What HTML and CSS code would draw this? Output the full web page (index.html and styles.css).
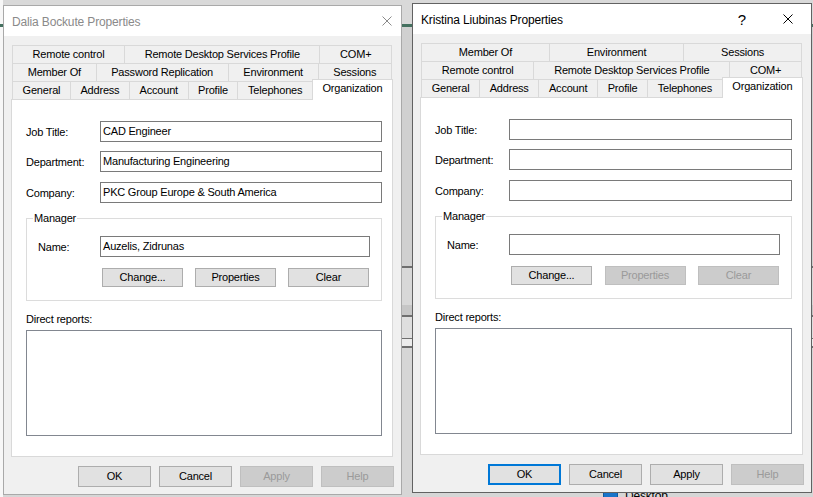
FILE: index.html
```html
<!DOCTYPE html>
<html lang="en">
<head>
<meta charset="utf-8">
<title>Properties</title>
<link rel="stylesheet" href="styles.css">
</head>
<body>
<div class="desktop">
  <div class="desk-icon"><span class="desk-glyph"></span><span class="desk-label">Desktop</span></div>

  <section class="dlg dlg-left is-inactive">
    <header class="titlebar">
      <span class="title">Dalia Bockute Properties</span>
      <span class="cap cap-close"><svg width="10" height="10" viewBox="0 0 10 10"><path d="M0.5 0.5L9.5 9.5M9.5 0.5L0.5 9.5" stroke="currentColor" stroke-width="1" fill="none"/></svg></span>
    </header>
    <div class="tabs">
      <div class="tabrow"><span class="tab">Remote control</span><span class="tab">Remote Desktop Services Profile</span><span class="tab">COM+</span></div>
      <div class="tabrow"><span class="tab">Member Of</span><span class="tab">Password Replication</span><span class="tab">Environment</span><span class="tab">Sessions</span></div>
      <div class="tabrow"><span class="tab">General</span><span class="tab">Address</span><span class="tab">Account</span><span class="tab">Profile</span><span class="tab">Telephones</span><span class="tab tab-active">Organization</span></div>
    </div>
    <div class="panel">
      <div class="field"><span class="lbl">Job Title:</span><div class="input">CAD Engineer</div></div>
      <div class="field"><span class="lbl">Department:</span><div class="input">Manufacturing Engineering</div></div>
      <div class="field field-company"><span class="lbl">Company:</span><div class="input">PKC Group Europe &amp; South America</div></div>
      <fieldset class="group">
        <legend>Manager</legend>
        <div class="field"><span class="lbl lbl-short">Name:</span><div class="input">Auzelis, Zidrunas</div></div>
        <div class="group-btns"><button class="btn btn-wide">Change...</button><button class="btn btn-wide">Properties</button><button class="btn btn-wide">Clear</button></div>
      </fieldset>
      <div class="reports-label">Direct reports:</div>
      <div class="listbox"></div>
    </div>
    <div class="dlg-btns"><button class="btn">OK</button><button class="btn">Cancel</button><button class="btn" disabled>Apply</button><button class="btn" disabled>Help</button></div>
  </section>

  <section class="dlg dlg-right">
    <header class="titlebar">
      <span class="title">Kristina Liubinas Properties</span>
      <span class="cap cap-help">?</span>
      <span class="cap cap-close"><svg width="10" height="10" viewBox="0 0 10 10"><path d="M0.5 0.5L9.5 9.5M9.5 0.5L0.5 9.5" stroke="currentColor" stroke-width="1" fill="none"/></svg></span>
    </header>
    <div class="tabs">
      <div class="tabrow"><span class="tab">Member Of</span><span class="tab">Environment</span><span class="tab">Sessions</span></div>
      <div class="tabrow"><span class="tab">Remote control</span><span class="tab">Remote Desktop Services Profile</span><span class="tab">COM+</span></div>
      <div class="tabrow"><span class="tab">General</span><span class="tab">Address</span><span class="tab">Account</span><span class="tab">Profile</span><span class="tab">Telephones</span><span class="tab tab-active">Organization</span></div>
    </div>
    <div class="panel">
      <div class="field"><span class="lbl">Job Title:</span><div class="input"></div></div>
      <div class="field"><span class="lbl">Department:</span><div class="input"></div></div>
      <div class="field field-company"><span class="lbl">Company:</span><div class="input"></div></div>
      <fieldset class="group">
        <legend>Manager</legend>
        <div class="field"><span class="lbl lbl-short">Name:</span><div class="input"></div></div>
        <div class="group-btns"><button class="btn btn-wide">Change...</button><button class="btn btn-wide" disabled>Properties</button><button class="btn btn-wide" disabled>Clear</button></div>
      </fieldset>
      <div class="reports-label">Direct reports:</div>
      <div class="listbox"></div>
    </div>
    <div class="dlg-btns"><button class="btn btn-default">OK</button><button class="btn">Cancel</button><button class="btn">Apply</button><button class="btn" disabled>Help</button></div>
  </section>
</div>
</body>
</html>
```
FILE: styles.css
```css
* { box-sizing: border-box; }
html, body { margin: 0; padding: 0; }
body {
  width: 813px;
  height: 497px;
  overflow: hidden;
  font-family: "Liberation Sans", Arial, sans-serif;
  font-size: 11px;
  letter-spacing: -0.2px;
  color: #000;
}
.desktop {
  position: relative;
  width: 813px;
  height: 497px;
  background:
    linear-gradient(to bottom, transparent 0 24px, #44705f 24px 27px, transparent 27px),
    linear-gradient(to right, #f7f7f7 0 3px, transparent 3px),
    linear-gradient(to bottom, #d9d9d9 0 24px, #d0d0d0 27px 266px, #6e6e6e 266px 268px, #d8d8d8 268px 305px, #c6c6c6 305px 315px, #6e6e6e 315px 317px, #dedede 317px 338px, #6e6e6e 338px 339px, #ececec 339px 346px, #6e6e6e 346px 348px, #d6d6d6 348px);
}

.desk-icon {
  position: absolute;
  left: 603px;
  top: 489px;
  display: flex;
  align-items: flex-start;
  gap: 7px;
  font-size: 12px;
}
.desk-glyph { width: 15px; height: 14px; background: #1a74c9; border: 1px solid #0f5aa0; }
.desk-label { line-height: 14px; }

.dlg {
  position: absolute;
  display: flex;
  flex-direction: column;
  height: 490px;
  background: #f0f0f0;
  border: 1px solid #5f5f5f;
}
.dlg-left { left: 3px; top: 5px; width: 399px; border-color: #a9a9a9; }
.dlg-right { left: 412px; top: 3px; width: 400px; border-color: #626262; }

.titlebar {
  flex: none;
  height: 30px;
  background: #fff;
  display: flex;
  align-items: center;
  padding-left: 8px;
}
.title { flex: 1; font-size: 12px; letter-spacing: -0.15px; padding-top: 1px; }
.is-inactive .title { color: #8a8a8a; }
.cap {
  height: 30px;
  display: flex;
  align-items: center;
  justify-content: center;
  color: #000;
}
.is-inactive .cap { color: #8a8a8a; }
.cap svg { display: block; }
.cap-close { width: 46px; }
.dlg-left .cap-close { width: 28px; }
.cap-help { width: 46px; font-size: 15px; letter-spacing: 0; }

.tabs { flex: none; margin: 9px 9px 0 8px; }
.tabrow { display: flex; height: 18px; }
.tab {
  flex: 1 1 auto;
  border: 1px solid #d9d9d9;
  border-bottom: 0;
  margin-left: -1px;
  text-align: center;
  line-height: 16px;
  white-space: nowrap;
  background: #f0f0f0;
}
.tab:first-child { margin-left: 0; }
.tab-active {
  position: relative;
  z-index: 1;
  background: #fff;
  margin: -2px -1px -1px -1px;
  line-height: 17px;
}

.panel {
  flex: none;
  height: 358px;
  margin: 0 8px 0 7px;
  border: 1px solid #d9d9d9;
  background: #fff;
  padding: 21px 10px 20px 14px;
}
.field { display: flex; align-items: center; height: 21px; }
.field + .field { margin-top: 9px; }
.field-company { margin-top: 10px !important; }
.lbl { flex: none; width: 74px; }
.lbl-short { width: 62px; }
.input {
  flex: 1;
  height: 21px;
  border: 1px solid #7a7a7a;
  background: #fff;
  padding-left: 2px;
  line-height: 19px;
  white-space: nowrap;
  overflow: hidden;
}

.group {
  margin: 8px 0 0;
  padding: 11px 11px 13px 11px;
  border: 1px solid #dcdcdc;
  min-width: 0;
}
.group legend {
  padding: 0 1px;
  margin-left: -5px;
  line-height: 14px;
  font-size: 11px;
}
.group-btns {
  display: flex;
  justify-content: space-between;
  margin-top: 11px;
  padding: 0 1px 0 64px;
}

.btn {
  font-family: inherit;
  font-size: 11px;
  letter-spacing: -0.2px;
  color: #000;
  width: 73px;
  height: 21px;
  padding: 0;
  margin: 0;
  background: #e1e1e1;
  border: 1px solid #adadad;
  border-radius: 0;
  line-height: 19px;
}
.btn-wide { width: 81px; height: 19px; line-height: 17px; }
.btn:disabled { background: #cccccc; border-color: #bfbfbf; color: #9a9a9a; }
.btn-default { border: 2px solid #0078d7; line-height: 17px; }

.reports-label { margin-top: 11px; line-height: 14px; }
.listbox { margin-top: 4px; height: 106px; border: 1px solid #828790; background: #fff; }

.dlg-btns {
  flex: none;
  display: flex;
  justify-content: flex-end;
  gap: 8px;
  margin: 9px 7px 0 0;
}
```
